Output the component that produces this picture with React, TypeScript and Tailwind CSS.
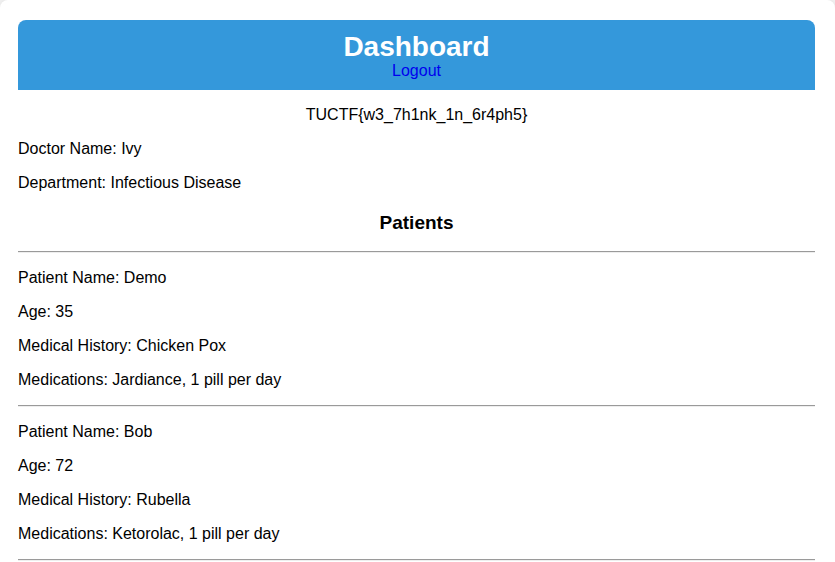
const patients = [
  { name: 'Demo', age: 35, history: 'Chicken Pox', meds: 'Jardiance, 1 pill per day' },
  { name: 'Bob', age: 72, history: 'Rubella', meds: 'Ketorolac, 1 pill per day' },
];

function Rule() {
  return <hr className="mt-2 mb-[9px] h-0 border-0 border-t border-b border-t-[#9a9a9a] border-b-[#eeeeee]" />;
}

export default function App() {
  return (
    <div className="min-h-[562px] bg-[#f4f4f4] font-['Liberation_Sans',Arial,sans-serif] text-black">
      <div className="rounded-lg bg-white pl-[18px] pr-5 pt-5 pb-6 shadow-[0_0_10px_rgba(0,0,0,0.1)]">
        {/* Header */}
        <div className="rounded-t-lg bg-[#3498db] pt-[11px] pb-[10px] text-center">
          <h1 className="text-[28px] font-bold leading-[31px] text-white">Dashboard</h1>
          <a href="#" className="block text-base leading-[18px] text-[#0000ee]">
            Logout
          </a>
        </div>

        <p className="mt-4 mb-4 text-center text-base leading-[18px]">TUCTF{'{'}w3_7h1nk_1n_6r4ph5{'}'}</p>
        <p className="my-4 text-base leading-[18px]">Doctor Name: Ivy</p>
        <p className="my-4 text-base leading-[18px]">Department: Infectious Disease</p>

        <h3 className="mt-5 mb-[17px] text-center text-[19px] font-bold leading-[22px]">Patients</h3>
        <Rule />

        {patients.map((p) => (
          <div key={p.name}>
            <p className="my-4 text-base leading-[18px]">Patient Name: {p.name}</p>
            <p className="my-4 text-base leading-[18px]">Age: {p.age}</p>
            <p className="my-4 text-base leading-[18px]">Medical History: {p.history}</p>
            <p className="my-4 text-base leading-[18px]">Medications: {p.meds}</p>
            <Rule />
          </div>
        ))}
      </div>
    </div>
  );
}
